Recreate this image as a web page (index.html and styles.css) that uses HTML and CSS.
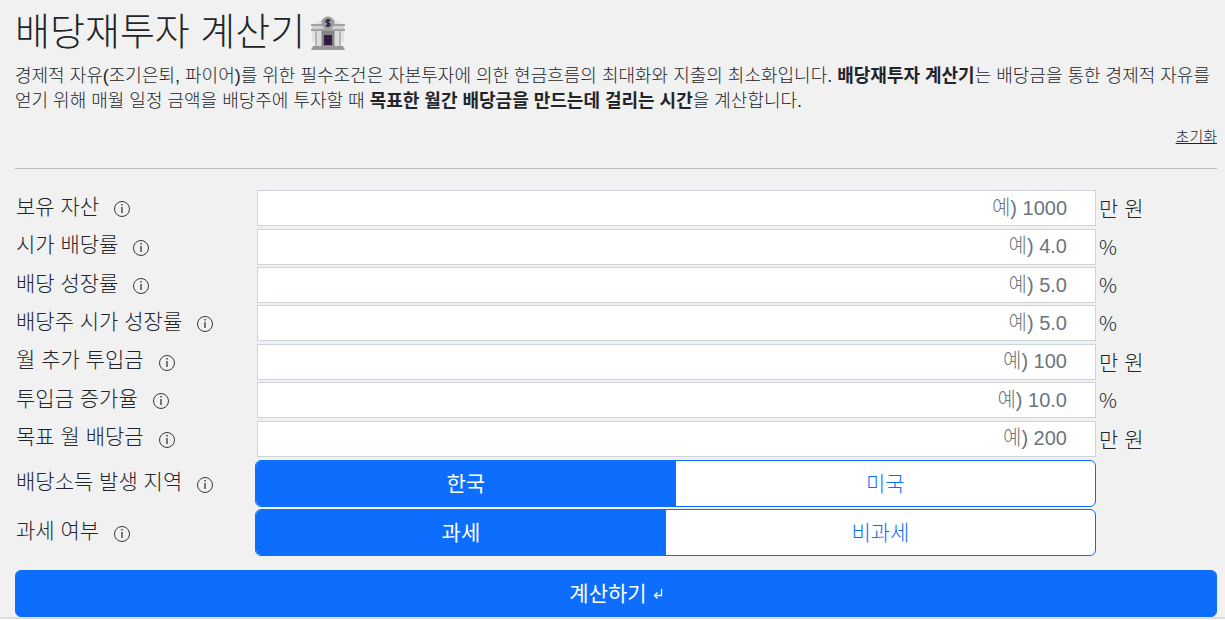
FILE: index.html
```html
<!DOCTYPE html>
<html lang="ko">
<head>
<meta charset="utf-8">
<meta name="viewport" content="width=device-width, initial-scale=1">
<title>배당재투자 계산기</title>
<link rel="stylesheet" href="styles.css">
</head>
<body>
<main class="page">
  <h1 class="title">배당재투자 계산기
    <svg class="bank" viewBox="0 0 36 36" aria-hidden="true">
      <path d="M18 1 34 10v17H2V10z" fill="#e3e3e3"/>
      <path d="M5 15h26v16H5z" fill="#b5b5b5"/>
      <path d="M7 16h4v15H7zM25 16h4v15h-4z" fill="#dcdcdc"/>
      <path d="M12 16h12v15H12z" fill="#858585"/>
      <path d="M14 20h8v10h-8z" fill="#321b41"/>
      <path d="M2 11h32v3H2z" fill="#d0d0d0"/>
      <path d="M1 9h34v2H1zM1 14h34v2H1z" fill="#a2a2a2"/>
      <path d="M3 31h30l2 4H1z" fill="#999"/>
      <circle cx="18" cy="8" r="6.500" fill="#9b9b9b"/>
      <path d="M20 6c-1-1.500-4-1.200-4 .4 0 1.800 4 1.200 4 3.200 0 1.600-3 1.900-4 .4M18 4v8" fill="none" stroke="#321b41" stroke-width="1.400"/>
    </svg>
  </h1>
  <p class="intro">경제적 자유(조기은퇴, 파이어)를 위한 필수조건은 자본투자에 의한 현금흐름의 최대화와 지출의 최소화입니다. <strong>배당재투자 계산기</strong>는 배당금을 통한 경제적 자유를 얻기 위해 매월 일정 금액을 배당주에 투자할 때 <strong>목표한 월간 배당금을 만드는데 걸리는 시간</strong>을 계산합니다.</p>
  <form class="calculator">
    <div class="reset-row"><button class="reset" type="reset">초기화</button></div>
    <hr class="divider">
    <div class="fields">
      <div class="row"><label class="label" for="asset">보유 자산 <svg class="info"><use href="#info"/></svg></label><input class="field" id="asset" placeholder="예) 1000"><span class="unit">만 원</span></div>
      <div class="row"><label class="label" for="yield">시가 배당률 <svg class="info"><use href="#info"/></svg></label><input class="field" id="yield" placeholder="예) 4.0"><span class="unit percent">%</span></div>
      <div class="row"><label class="label" for="growth">배당 성장률 <svg class="info"><use href="#info"/></svg></label><input class="field" id="growth" placeholder="예) 5.0"><span class="unit percent">%</span></div>
      <div class="row"><label class="label" for="price">배당주 시가 성장률 <svg class="info"><use href="#info"/></svg></label><input class="field" id="price" placeholder="예) 5.0"><span class="unit percent">%</span></div>
      <div class="row"><label class="label" for="monthly">월 추가 투입금 <svg class="info"><use href="#info"/></svg></label><input class="field" id="monthly" placeholder="예) 100"><span class="unit">만 원</span></div>
      <div class="row"><label class="label" for="increase">투입금 증가율 <svg class="info"><use href="#info"/></svg></label><input class="field" id="increase" placeholder="예) 10.0"><span class="unit percent">%</span></div>
      <div class="row"><label class="label" for="goal">목표 월 배당금 <svg class="info"><use href="#info"/></svg></label><input class="field" id="goal" placeholder="예) 200"><span class="unit">만 원</span></div>
    </div>
    <div class="choices">
      <div class="row"><span class="label" id="region-label">배당소득 발생 지역 <svg class="info"><use href="#info"/></svg></span>
        <div class="toggle" role="radiogroup" aria-labelledby="region-label">
          <label class="option"><input class="radio" type="radio" name="region" checked>한국</label>
          <label class="option"><input class="radio" type="radio" name="region">미국</label>
        </div>
      </div>
      <div class="row"><span class="label" id="tax-label">과세 여부 <svg class="info"><use href="#info"/></svg></span>
        <div class="toggle" role="radiogroup" aria-labelledby="tax-label">
          <label class="option"><input class="radio" type="radio" name="tax" checked>과세</label>
          <label class="option"><input class="radio" type="radio" name="tax">비과세</label>
        </div>
      </div>
    </div>
    <button class="submit" type="button">계산하기
      <svg class="enter" viewBox="0 0 10 12" aria-hidden="true"><path d="M8.500 1v6.500H2M4.500 4.500l-3 3 3 3" fill="none" stroke="currentColor" stroke-width="1.300"/></svg>
    </button>
  </form>
</main>
<svg class="symbols" aria-hidden="true">
  <symbol id="info" viewBox="0 0 18 18"><circle cx="9" cy="9" r="7.500" fill="none" stroke="#212529" stroke-width=".9"/><path d="M9 7v6" stroke="#212529" stroke-width="1.200"/><path d="M9 4v1.500" stroke="#212529" stroke-width="1.300"/></symbol>
</svg>
</body>
</html>
```
FILE: styles.css
```css
* { box-sizing: border-box; }
body {
  margin: 0;
  background: #fff;
  color: #212529;
  font-family: "Liberation Sans", "Noto Sans CJK KR", sans-serif;
  font-weight: 300;
}
.page {
  padding: 8px 8px 0 15px;
  border-bottom: 2px solid #dedede;
  background: #f1f1f1;
}
.title {
  display: flex;
  align-items: center;
  gap: 5px;
  margin: 0 0 8px;
  font-size: 38px;
  line-height: 48px;
  font-weight: 300;
}
.bank { width: 36px; height: 36px; margin-top: 2px; }
.intro { margin: 0; font-size: 18px; line-height: 25px; }
.intro strong { font-weight: 700; }
.reset-row { display: flex; justify-content: flex-end; margin-top: 11px; }
.reset {
  padding: 0;
  border: 0;
  background: none;
  color: #212529;
  font: inherit;
  font-size: 15px;
  line-height: 24px;
  text-decoration: underline;
}
.divider { margin: 19px 0 20px; border: 0; border-top: 1px solid #bdbdbd; }
.fields { display: grid; grid-auto-rows: 1fr; min-height: 269px; }
.row {
  display: grid;
  grid-template-columns: 240px 1fr 119px;
  column-gap: 2px;
  align-items: center;
}
.label {
  display: flex;
  align-items: center;
  gap: 14px;
  padding-left: 1px;
  padding-bottom: 3px;
  font-size: 21px;
  line-height: 24px;
}
.info { width: 18px; height: 18px; margin-top: 5px; }
.field {
  width: 100%;
  height: 36px;
  padding: 0 28px;
  border: 1px solid #ced4da;
  background: #fff;
  color: #212529;
  font: inherit;
  font-size: 20px;
  text-align: right;
}
.field::placeholder { color: #6c757d; opacity: 1; }
.unit { padding: 2px 0 0 1px; font-size: 21px; line-height: 24px; }
.percent { padding-top: 0; font-family: "Noto Sans CJK KR", sans-serif; font-size: 20px; }
.choices { display: grid; gap: 2px; margin-top: 2px; }
.choices .row { column-gap: 0; grid-template-columns: 240px 1fr 121px; }
.toggle {
  display: flex;
  overflow: hidden;
  border: 1px solid #0d6efd;
  border-radius: 6px;
  background: #fff;
}
.option {
  position: relative;
  flex: 1 1 auto;
  padding: 10px 12px;
  color: #0d6efd;
  font-size: 21px;
  line-height: 25px;
  text-align: center;
}
.option:has(:checked) { background: #0d6efd; color: #fff; font-weight: 400; }
.radio { position: absolute; inset: 0; margin: 0; opacity: 0; }
.submit {
  display: flex;
  align-items: center;
  justify-content: center;
  gap: 6px;
  width: 100%;
  margin-top: 14px;
  padding: 10px 12px;
  border: 1px solid #0d6efd;
  border-radius: 6px;
  background: #0d6efd;
  color: #fff;
  font: inherit;
  font-size: 21px;
  font-weight: 400;
  line-height: 25px;
}
.enter { width: 10px; height: 12px; }
.symbols { display: none; }
```
